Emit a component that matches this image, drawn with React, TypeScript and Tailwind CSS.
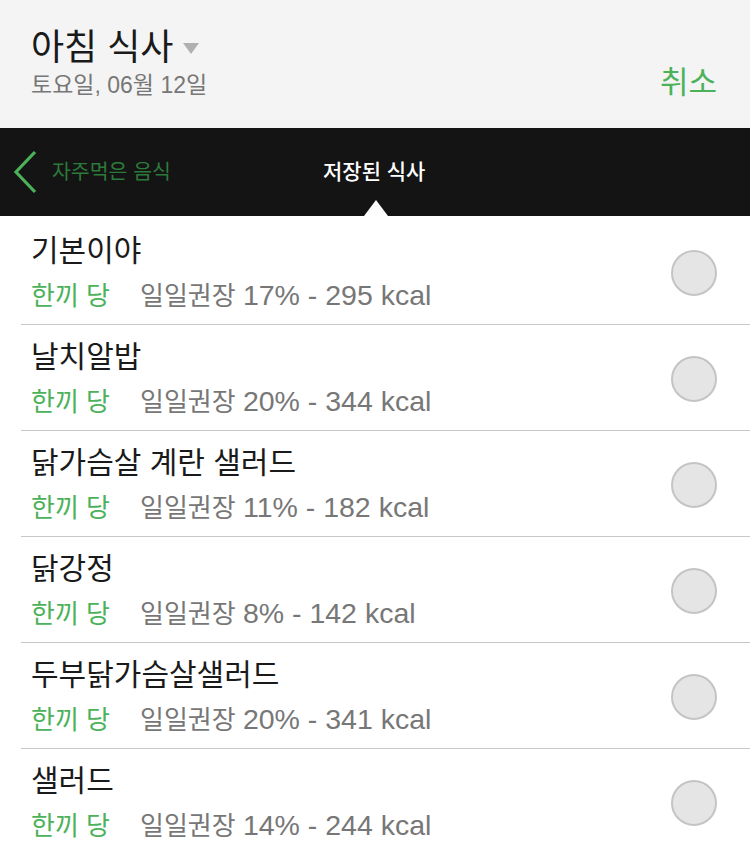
import * as React from "react";

const meals = [
  { name: "기본이야", pct: "17%", kcal: "295" },
  { name: "날치알밥", pct: "20%", kcal: "344" },
  { name: "닭가슴살 계란 샐러드", pct: "11%", kcal: "182" },
  { name: "닭강정", pct: "8%", kcal: "142" },
  { name: "두부닭가슴살샐러드", pct: "20%", kcal: "341" },
  { name: "샐러드", pct: "14%", kcal: "244" },
];

const font = { fontFamily: '"Liberation Sans", "Noto Sans CJK KR", sans-serif' };

function MealRow({ name, pct, kcal, first }: { name: string; pct: string; kcal: string; first?: boolean }) {
  return (
    <div className={first ? "pl-[21px] pt-[3px]" : "pl-[21px]"}>
      <div className="flex h-[106px] items-start border-b border-[#c8c8c8] pr-[33px]">
        <div className="flex-1 pl-[10px] pt-[14px]">
          <p className="text-[30px] leading-[36px] text-[#1a1a1a]">{name}</p>
          <p className="mt-[11px] text-[26px] leading-[30px] text-[#777]">
            <span className="text-[#4cb25a]">한끼 당</span>
            <span className="ml-[30px]">일일권장 </span>
            <span className="text-[28.5px]">
              {pct} - {kcal} kcal
            </span>
          </p>
        </div>
        <div className="mt-[31px] h-[46px] w-[46px] rounded-full border-2 border-[#c4c4c4] bg-[#e5e5e5]" />
      </div>
    </div>
  );
}

export default function App() {
  return (
    <div className="h-[841px] w-[750px] overflow-hidden bg-white" style={font}>
      <header className="flex h-[128px] items-start justify-between bg-[#f4f4f4] pl-[31px] pr-[33px] pt-[28px]">
        <div>
          <div className="flex items-center gap-[10px]">
            <h1 className="text-[36px] leading-[40px] text-[#1a1a1a]">아침 식사</h1>
            <svg width="16" height="12" viewBox="0 0 16 12" className="mt-[2px]">
              <polygon points="0,0 16,0 8,11" fill="#b0b0b0" />
            </svg>
          </div>
          <p className="mt-[3px] text-[23px] leading-[28px] text-[#777]">토요일, 06월 12일</p>
        </div>
        <button className="mt-[37px] text-[31px] leading-[36px] text-[#4cb25a]">취소</button>
      </header>

      <nav className="relative flex h-[88px] items-center bg-[#141414]">
        <div className="flex w-[310px] items-center pl-[12px]">
          <svg width="26" height="46" viewBox="0 0 26 46">
            <polyline points="23,3 4,23 23,43" fill="none" stroke="#4cb25a" strokeWidth="3.2" />
          </svg>
          <span className="ml-[14px] text-[20.5px] text-[#2c7a3a]">자주먹은 음식</span>
        </div>
        <span className="ml-[13px] text-[21px] font-medium text-white">저장된 식사</span>
        <div className="absolute bottom-0 left-[364px] h-0 w-0 border-x-[12px] border-b-[16px] border-x-transparent border-b-white" />
      </nav>

      <div>
        {meals.map((m, i) => (
          <MealRow key={m.name} {...m} first={i === 0} />
        ))}
      </div>
    </div>
  );
}
